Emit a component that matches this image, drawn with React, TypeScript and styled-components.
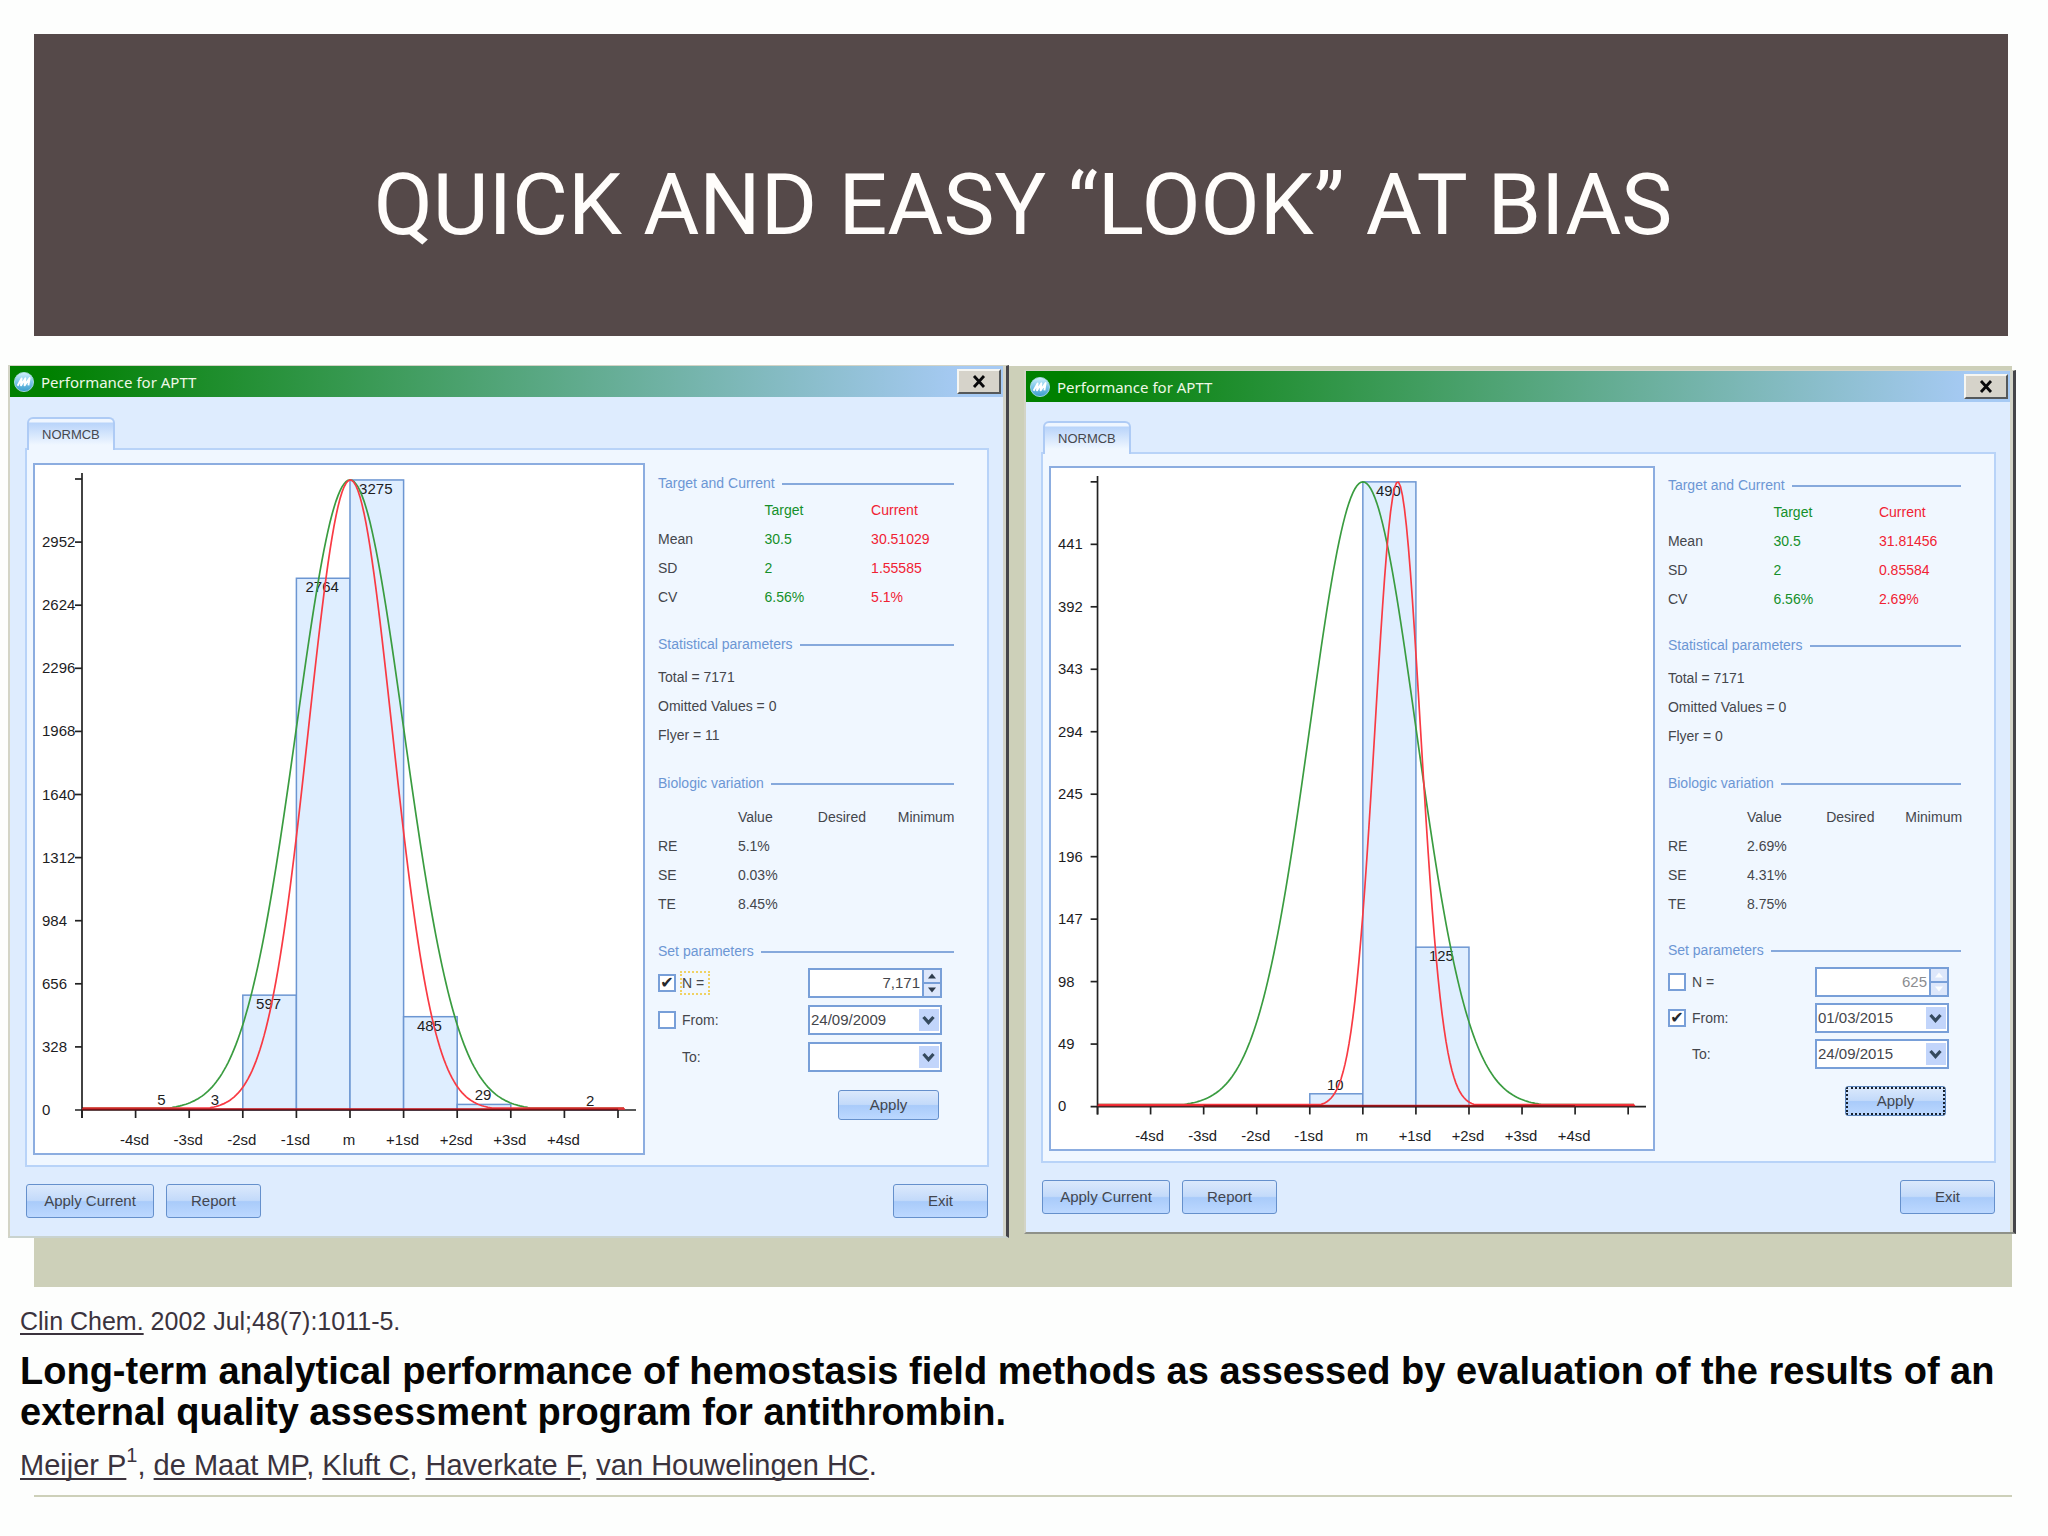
import React, { useId } from "react";
import styled, { createGlobalStyle, css } from "styled-components";

const sans = '"Liberation Sans", Arial, sans-serif';
const frame = "#789fd8";
const khaki = "#cdd0b9";

const GlobalStyle = createGlobalStyle`
  *, *::before, *::after { box-sizing: border-box; }
  body { margin: 0; background: #fdfefd; font-family: ${sans}; }
  h1, h2, h3, p, fieldset { margin: 0; padding: 0; border: 0; font-weight: normal; }
`;

/* ---------- slide ---------- */

const Slide = styled.main`
  padding-top: 34px;
`;

const Banner = styled.header`
  margin: 0 40px 0 34px;
  padding: 121px 18px 81px 22px;
  background: #554949;
  text-align: center;
`;

const Title = styled.h1`
  font-family: Roboto, ${sans};
  font-size: 86px;
  line-height: 100px;
  color: #fffdfb;
`;

const Stage = styled.section`
  display: grid;
  grid-template-columns: 1001fr 992fr;
  column-gap: 15px;
  align-items: start;
  margin-top: 29px;
  padding: 0 32px 49px 8px;
  background: linear-gradient(${khaki}, ${khaki}) no-repeat 34px 1px / calc(100% - 70px) 100%;
`;

/* ---------- dialog window ---------- */

const Dialog = styled.section<{ $inset: boolean }>`
  border: 2px solid #d3d4c6;
  border-top-width: 1px;
  border-right: 3px solid #45454a;
  border-bottom-color: ${(p) => (p.$inset ? "#8e9189" : "#c9d3cf")};
  box-shadow: inset -3px 0 0 #d3d4c8;
  background: #deecfe;
  margin-top: ${(p) => (p.$inset ? 5 : 0)}px;
`;

const TitleBar = styled.div`
  display: flex;
  align-items: center;
  gap: 7px;
  height: 31px;
  margin-right: 3px;
  padding: 0 2px 0 4px;
  background: linear-gradient(90deg, #008000 4%, #a6caf4 96%);
`;

const DialogTitle = styled.h2`
  flex: 1;
  font-family: "Noto Sans", sans-serif;
  font-size: 15px;
  line-height: 24px;
  color: #eef8e6;
`;

const CloseButton = styled.button`
  display: grid;
  place-items: center;
  width: 44px;
  height: 25px;
  padding: 0;
  border: 2px solid;
  border-color: #f6f6f2 #55585a #55585a #f6f6f2;
  background: #d6d3ca;
`;

const Body = styled.div<{ $inset: boolean }>`
  padding: ${(p) => (p.$inset ? "19px 17px 18px 15px" : "20px 17px 18px 15px")};
`;

const Tab = styled.button`
  display: block;
  position: relative;
  height: 33px;
  margin: 0 0 -2px 2px;
  padding: 0 13px;
  border: 2px solid #aecbf5;
  border-bottom: 0;
  border-radius: 6px 6px 0 0;
  background: linear-gradient(#eff6ff 0 3px, #b9d4fa 4px, #f0f7ff 26px);
  font: 13px/28px ${sans};
  color: #46484e;
`;

const Pane = styled.div<{ $inset: boolean }>`
  display: grid;
  grid-template-columns: 612fr 296fr;
  column-gap: 13px;
  align-items: start;
  padding: ${(p) => (p.$inset ? 12 : 13)}px 33px 10px 6px;
  border: 2px solid #b8d3f8;
  background: #f0f7ff;
`;

const Footer = styled.div`
  display: flex;
  gap: 12px;
  padding: 17px 1px 0;
`;

const Spacer = styled.span`
  flex: 1;
`;

const PushButton = styled.button<{ $width: number; $height?: number; $focused?: boolean }>`
  width: ${(p) => p.$width}px;
  height: ${(p) => p.$height ?? 34}px;
  padding: 0;
  border: 1px solid #6590cc;
  border-radius: 3px;
  background: linear-gradient(#dbe9fc, #c3dafa 48%, #a9cbfa 52%, #bcd8ff);
  font: 15px/20px ${sans};
  color: #42464f;
  ${(p) =>
    p.$focused &&
    css`
      border-color: #5d86bd;
      outline: 2px dotted #16202c;
      outline-offset: -3px;
    `}
`;

/* ---------- side panel ---------- */

const Side = styled.div<{ $inset: boolean }>`
  display: flex;
  flex-direction: column;
  gap: ${(p) => (p.$inset ? 22 : 23)}px;
  padding-top: ${(p) => (p.$inset ? 9 : 10)}px;
  font-size: 14px;
  color: #44464c;
`;

const Group = styled.section`
  display: flex;
  flex-direction: column;
`;

const GroupTitle = styled.h3<{ $below: number }>`
  display: flex;
  align-items: center;
  gap: 7px;
  margin-bottom: ${(p) => p.$below}px;
  font-size: 14px;
  line-height: 20px;
  color: #6c96d4;
  white-space: nowrap;

  &::after {
    content: "";
    flex: 1;
    height: 2px;
    margin-top: 2px;
    background: #86a9dc;
  }
`;

const DataTable = styled.table`
  width: 100%;
  table-layout: fixed;
  border-collapse: collapse;

  th,
  td {
    height: 29px;
    padding: 0;
    font-weight: normal;
    text-align: left;
    white-space: nowrap;
  }
`;

const Col = styled.col<{ $share: number }>`
  width: ${(p) => p.$share}%;
`;

const Head = styled.th<{ $tone?: string }>`
  color: ${(p) => p.$tone ?? "inherit"};
`;

const Cell = styled.td<{ $tone?: string }>`
  color: ${(p) => p.$tone ?? "inherit"};
`;

const Line = styled.p`
  line-height: 29px;
`;

const Form = styled.form<{ $inset: boolean }>`
  display: flex;
  flex-direction: column;
  gap: ${(p) => (p.$inset ? 6 : 7)}px;
  padding-right: 12px;
`;

const Field = styled.div`
  display: grid;
  grid-template-columns: 24px 1fr 134px;
  align-items: center;
  height: 30px;
`;

const Check = styled.input`
  appearance: none;
  display: grid;
  place-items: center;
  width: 18px;
  height: 18px;
  margin: 0;
  border: 2px solid ${frame};
  background: #fff;

  &:checked::before {
    content: "✔";
    font: 16px/14px "DejaVu Sans", sans-serif;
    color: #26282c;
  }
`;

const FieldLabel = styled.label<{ $focused?: boolean }>`
  grid-column: 2;
  justify-self: start;
  line-height: 20px;
  outline: ${(p) => (p.$focused ? "2px dotted #f0d264" : "none")};
  padding-right: 4px;
`;

const Box = styled.div`
  display: flex;
  height: 30px;
  border: 2px solid ${frame};
  background: #fff;
`;

const NumberInput = styled.input`
  flex: 1;
  min-width: 0;
  padding: 0 2px;
  border: 0;
  background: transparent;
  font: 15px/20px ${sans};
  color: #44464c;
  text-align: right;

  &:disabled {
    color: #8b8d90;
  }
`;

const Steps = styled.div`
  display: flex;
  flex-direction: column;
  gap: 2px;
  width: 18px;
  border-left: 2px solid ${frame};
  background: ${frame};
`;

const StepButton = styled.button`
  flex: 1;
  display: grid;
  place-items: center;
  min-height: 0;
  padding: 0;
  border: 0;
  background: #dde7fb;
  color: #2f3c4c;

  &:disabled {
    color: #fbfdff;
  }
`;

const DateBox = styled(Box)`
  position: relative;
`;

const DateSelect = styled.select`
  appearance: none;
  width: 100%;
  padding: 0 26px 0 1px;
  border: 0;
  background: linear-gradient(#c2d5fb, #c2d5fb) no-repeat right 1px center / 20px 22px;
  font: 15px/20px ${sans};
  color: #44464c;
`;

const Chevron = styled.svg`
  position: absolute;
  right: 5px;
  top: 8px;
  pointer-events: none;
`;

const ApplyRow = styled.div`
  display: flex;
  justify-content: flex-end;
  padding: 11px 3px 0 0;
`;

/* ---------- chart ---------- */

const ChartFrame = styled.figure`
  margin: 0;
  border: 2px solid #8cade0;
  background: #fff;
`;

const ChartSvg = styled.svg`
  display: block;
  width: 100%;
  height: auto;
`;

const ChartText = styled.text`
  font: 15px ${sans};
  fill: #1d1d1f;
`;

type Bar = { slot: number; count: number };

type ChartProps = {
  step: number;
  top: number;
  bars: Bar[];
  mean: number;
  sd: number;
  darkSpan: [number, number];
};

const X0 = 47;
const BASE = 645;
const TICK = 63.1;
const DX = 53.6;
const MID = X0 + 5 * DX;
const END = X0 + 10 * DX + 7;

const sdLabels = ["-4sd", "-3sd", "-2sd", "-1sd", "m", "+1sd", "+2sd", "+3sd", "+4sd"];

function bell(center: number, spread: number, height: number) {
  const points: string[] = [];
  for (let x = X0; x <= END; x += 2) {
    const z = (x - center) / spread;
    const y = BASE - Math.max(2, height * Math.exp((-z * z) / 2));
    points.push(`${x.toFixed(1)},${y.toFixed(1)}`);
  }
  return points.join(" ");
}

function Histogram({ step, top, bars, mean, sd, darkSpan }: ChartProps) {
  const unit = TICK / step;
  const peak = top * unit;
  return (
    <ChartFrame>
      <ChartSvg viewBox="0 0 608 688" role="img" aria-label="Distribution of results against target">
        {bars.map(({ slot, count }) => (
          <rect
            key={slot}
            x={X0 + slot * DX}
            y={BASE - count * unit}
            width={DX}
            height={count * unit}
            fill="#dfeeff"
            stroke="#6c96d2"
            strokeWidth="1.5"
          />
        ))}
        {bars.map(({ slot, count }) => {
          const y = BASE - count * unit;
          return (
            <ChartText
              key={slot}
              x={X0 + (slot + 0.5) * DX - 1}
              y={count * unit > 60 ? y + 14 : y - 4}
              textAnchor="middle"
            >
              {count}
            </ChartText>
          );
        })}
        <polyline points={bell(MID, DX, peak)} fill="none" stroke="#3a9c40" strokeWidth="1.7" />
        <polyline
          points={bell(MID + mean * DX, sd * DX, peak)}
          fill="none"
          stroke="#f93a43"
          strokeWidth="1.7"
        />
        <g stroke="#222" strokeWidth="1.7">
          <line x1={X0} y1="8" x2={X0} y2={BASE + 8} />
          <line x1={X0 - 7} y1={BASE} x2="601" y2={BASE} />
          {Array.from({ length: 11 }, (_, i) => (
            <line key={i} x1={X0 + i * DX} y1={BASE} x2={X0 + i * DX} y2={BASE + 8} />
          ))}
          {Array.from({ length: 10 }, (_, i) => (
            <line key={i} x1={X0 - 7} y1={BASE - (i + 1) * TICK} x2={X0} y2={BASE - (i + 1) * TICK} />
          ))}
        </g>
        <line x1={X0} y1={BASE - 1} x2={END} y2={BASE - 1} stroke="#e8262e" strokeWidth="1.5" />
        <line
          x1={X0 + darkSpan[0] * DX}
          y1={BASE - 0.5}
          x2={X0 + darkSpan[1] * DX}
          y2={BASE - 0.5}
          stroke="#7e1014"
          strokeWidth="1.5"
        />
        {Array.from({ length: 10 }, (_, i) => (
          <ChartText key={i} x="7" y={BASE - i * TICK + 5}>
            {i * step}
          </ChartText>
        ))}
        {sdLabels.map((label, i) => (
          <ChartText key={label} x={X0 + (i + 1) * DX - 1} y={BASE + 35} textAnchor="middle">
            {label}
          </ChartText>
        ))}
      </ChartSvg>
    </ChartFrame>
  );
}

/* ---------- icons ---------- */

function AppIcon() {
  const id = useId();
  return (
    <svg width="20" height="20" viewBox="0 0 20 20" aria-hidden="true">
      <defs>
        <linearGradient id={id} x1="0" y1="0" x2="0" y2="1">
          <stop offset="0" stopColor="#d3f0fb" />
          <stop offset="0.5" stopColor="#7cc6ea" />
          <stop offset="1" stopColor="#3a9ccb" />
        </linearGradient>
      </defs>
      <circle cx="10" cy="10" r="9.6" fill={`url(#${id})`} stroke="#b5e0f0" strokeWidth="0.8" />
      <path
        d="M3.6 13.8 7.6 6.4 7 13.4 11.4 6.2 10.6 13.4 15.6 6 14.4 13.4"
        fill="none"
        stroke="#fff"
        strokeWidth="1.9"
        strokeLinejoin="round"
      />
    </svg>
  );
}

function CloseIcon() {
  return (
    <svg width="14" height="13" viewBox="0 0 14 13" aria-hidden="true">
      <path d="M2 1 12 12M12 1 2 12" stroke="#08080a" strokeWidth="2.8" />
    </svg>
  );
}

function ChevronIcon() {
  return (
    <Chevron width="13" height="11" viewBox="0 0 13 11" aria-hidden="true">
      <path d="M1.5 2 6.5 7.6 11.5 2" fill="none" stroke="#354a5e" strokeWidth="3.2" />
    </Chevron>
  );
}

function Arrow({ up }: { up?: boolean }) {
  return (
    <svg width="8" height="6" viewBox="0 0 8 6" aria-hidden="true">
      <path d={up ? "M0 5.5 4 0.5 8 5.5Z" : "M0 0.5 4 5.5 8 0.5Z"} fill="currentColor" />
    </svg>
  );
}

/* ---------- performance window ---------- */

type WindowData = {
  inset: boolean;
  chart: ChartProps;
  summary: [string, string, string][];
  flyer: number;
  variation: [string, string][];
  n: string;
  byCount: boolean;
  from: string;
  to: string;
};

function PerformanceWindow({ data }: { data: WindowData }) {
  const id = useId();
  const green = "#15902a";
  const red = "#f02233";
  return (
    <Dialog $inset={data.inset} aria-labelledby={`${id}-title`}>
      <TitleBar>
        <AppIcon />
        <DialogTitle id={`${id}-title`}>Performance for APTT</DialogTitle>
        <CloseButton type="button" aria-label="Close">
          <CloseIcon />
        </CloseButton>
      </TitleBar>
      <Body $inset={data.inset}>
        <Tab type="button">NORMCB</Tab>
        <Pane $inset={data.inset}>
          <Histogram {...data.chart} />
          <Side $inset={data.inset}>
            <Group>
              <GroupTitle $below={2}>Target and Current</GroupTitle>
              <DataTable>
                <colgroup>
                  <Col $share={36} />
                  <Col $share={36} />
                  <Col $share={28} />
                </colgroup>
                <thead>
                  <tr>
                    <Cell />
                    <Head $tone={green}>Target</Head>
                    <Head $tone={red}>Current</Head>
                  </tr>
                </thead>
                <tbody>
                  {data.summary.map(([name, target, current]) => (
                    <tr key={name}>
                      <Head>{name}</Head>
                      <Cell $tone={green}>{target}</Cell>
                      <Cell $tone={red}>{current}</Cell>
                    </tr>
                  ))}
                </tbody>
              </DataTable>
            </Group>
            <Group>
              <GroupTitle $below={9}>Statistical parameters</GroupTitle>
              <Line>Total = 7171</Line>
              <Line>Omitted Values = 0</Line>
              <Line>Flyer = {data.flyer}</Line>
            </Group>
            <Group>
              <GroupTitle $below={9}>Biologic variation</GroupTitle>
              <DataTable>
                <colgroup>
                  <Col $share={27} />
                  <Col $share={27} />
                  <Col $share={27} />
                  <Col $share={19} />
                </colgroup>
                <thead>
                  <tr>
                    <Cell />
                    <Head>Value</Head>
                    <Head>Desired</Head>
                    <Head>Minimum</Head>
                  </tr>
                </thead>
                <tbody>
                  {data.variation.map(([name, value]) => (
                    <tr key={name}>
                      <Head>{name}</Head>
                      <Cell>{value}</Cell>
                      <Cell />
                      <Cell />
                    </tr>
                  ))}
                </tbody>
              </DataTable>
            </Group>
            <Group>
              <GroupTitle $below={7}>Set parameters</GroupTitle>
              <Form $inset={data.inset} onSubmit={(e) => e.preventDefault()}>
                <Field>
                  <Check type="checkbox" id={`${id}-n`} defaultChecked={data.byCount} />
                  <FieldLabel htmlFor={`${id}-n`} $focused={data.byCount}>
                    N =
                  </FieldLabel>
                  <Box>
                    <NumberInput aria-label="N" defaultValue={data.n} disabled={!data.byCount} />
                    <Steps>
                      <StepButton type="button" aria-label="Increase" disabled={!data.byCount}>
                        <Arrow up />
                      </StepButton>
                      <StepButton type="button" aria-label="Decrease" disabled={!data.byCount}>
                        <Arrow />
                      </StepButton>
                    </Steps>
                  </Box>
                </Field>
                <Field>
                  <Check type="checkbox" id={`${id}-from`} defaultChecked={!data.byCount} />
                  <FieldLabel htmlFor={`${id}-from`}>From:</FieldLabel>
                  <DateBox>
                    <DateSelect aria-label="From date" defaultValue={data.from}>
                      <option>{data.from}</option>
                    </DateSelect>
                    <ChevronIcon />
                  </DateBox>
                </Field>
                <Field>
                  <FieldLabel htmlFor={`${id}-to`}>To:</FieldLabel>
                  <DateBox>
                    <DateSelect id={`${id}-to`} defaultValue={data.to}>
                      <option>{data.to}</option>
                    </DateSelect>
                    <ChevronIcon />
                  </DateBox>
                </Field>
                <ApplyRow>
                  <PushButton $width={101} $height={30} $focused={!data.byCount}>
                    Apply
                  </PushButton>
                </ApplyRow>
              </Form>
            </Group>
          </Side>
        </Pane>
        <Footer>
          <PushButton type="button" $width={128}>
            Apply Current
          </PushButton>
          <PushButton type="button" $width={95}>
            Report
          </PushButton>
          <Spacer />
          <PushButton type="button" $width={95}>
            Exit
          </PushButton>
        </Footer>
      </Body>
    </Dialog>
  );
}

/* ---------- citation ---------- */

const Citation = styled.article`
  padding: 18px 20px 12px;
  color: #3b333d;
`;

const Journal = styled.p`
  font-size: 25px;
  line-height: 32px;
`;

const PaperTitle = styled.h2`
  margin: 14px 0;
  font-size: 38px;
  font-weight: bold;
  line-height: 41px;
  color: #050505;
`;

const Authors = styled.p`
  font-size: 29px;
  line-height: 36px;
`;

const CiteLink = styled.a`
  color: inherit;
  text-decoration: underline 2px;
  text-underline-offset: 3px;
  text-decoration-skip-ink: none;
`;

const Note = styled.sup`
  font-size: 20px;
  line-height: 0;
  vertical-align: 13px;
`;

const Rule = styled.hr`
  height: 2px;
  margin: 0 36px 0 34px;
  border: 0;
  background: ${khaki};
`;

const windows: WindowData[] = [
  {
    inset: false,
    chart: {
      step: 328,
      top: 3275,
      bars: [
        { slot: 1, count: 5 },
        { slot: 2, count: 3 },
        { slot: 3, count: 597 },
        { slot: 4, count: 2764 },
        { slot: 5, count: 3275 },
        { slot: 6, count: 485 },
        { slot: 7, count: 29 },
        { slot: 9, count: 2 },
      ],
      mean: 0.005,
      sd: 0.778,
      darkSpan: [0, 10],
    },
    summary: [
      ["Mean", "30.5", "30.51029"],
      ["SD", "2", "1.55585"],
      ["CV", "6.56%", "5.1%"],
    ],
    flyer: 11,
    variation: [
      ["RE", "5.1%"],
      ["SE", "0.03%"],
      ["TE", "8.45%"],
    ],
    n: "7,171",
    byCount: true,
    from: "24/09/2009",
    to: "",
  },
  {
    inset: true,
    chart: {
      step: 49,
      top: 490,
      bars: [
        { slot: 4, count: 10 },
        { slot: 5, count: 490 },
        { slot: 6, count: 125 },
      ],
      mean: 0.657,
      sd: 0.428,
      darkSpan: [2, 9],
    },
    summary: [
      ["Mean", "30.5", "31.81456"],
      ["SD", "2", "0.85584"],
      ["CV", "6.56%", "2.69%"],
    ],
    flyer: 0,
    variation: [
      ["RE", "2.69%"],
      ["SE", "4.31%"],
      ["TE", "8.75%"],
    ],
    n: "625",
    byCount: false,
    from: "01/03/2015",
    to: "24/09/2015",
  },
];

export default function App() {
  return (
    <>
      <GlobalStyle />
      <Slide>
        <Banner>
          <Title>QUICK AND EASY “LOOK” AT BIAS</Title>
        </Banner>
        <Stage>
          {windows.map((data) => (
            <PerformanceWindow key={data.n} data={data} />
          ))}
        </Stage>
        <Citation>
          <Journal>
            <CiteLink href="#journal">Clin Chem.</CiteLink> 2002 Jul;48(7):1011-5.
          </Journal>
          <PaperTitle>
            Long-term analytical performance of hemostasis field methods as assessed by evaluation of
            the results of an external quality assessment program for antithrombin.
          </PaperTitle>
          <Authors>
            <CiteLink href="#meijer">Meijer P</CiteLink>
            <Note>1</Note>, <CiteLink href="#demaat">de Maat MP</CiteLink>,{" "}
            <CiteLink href="#kluft">Kluft C</CiteLink>,{" "}
            <CiteLink href="#haverkate">Haverkate F</CiteLink>,{" "}
            <CiteLink href="#vanhouwelingen">van Houwelingen HC</CiteLink>.
          </Authors>
        </Citation>
        <Rule />
      </Slide>
    </>
  );
}
